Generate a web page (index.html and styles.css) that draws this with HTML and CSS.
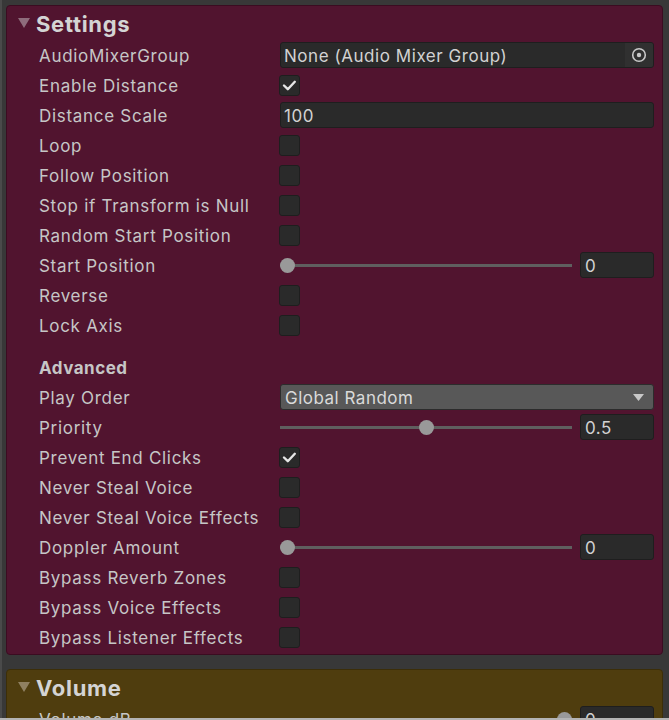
FILE: index.html
```html
<!DOCTYPE html>
<html>
<head>
<meta charset="utf-8">
<link rel="stylesheet" href="styles.css">
</head>
<body>
<div class="window">
  <section class="panel settings">
    <div class="header">
      <svg class="fold" width="12" height="10" viewBox="0 0 12 10"><polygon points="0,0 12,0 6,10"/></svg>
      <span class="title">Settings</span>
    </div>
    <div class="row"><span class="label">AudioMixerGroup</span>
      <div class="objfield"><span class="objtext">None (Audio Mixer Group)</span>
        <span class="picker"><svg width="16" height="16" viewBox="0 0 16 16"><circle cx="8" cy="8" r="6.3" fill="none" stroke="#c8c8c8" stroke-width="1.6"/><circle cx="8" cy="8" r="2.2" fill="#c8c8c8"/></svg></span>
      </div>
    </div>
    <div class="row"><span class="label">Enable Distance</span><span class="check on"><svg width="21" height="21" viewBox="0 0 21 21"><polyline points="5,10.5 8.8,14.2 15.8,6.8"/></svg></span></div>
    <div class="row"><span class="label">Distance Scale</span><div class="textfield"><span class="val">100</span></div></div>
    <div class="row"><span class="label">Loop</span><span class="check"></span></div>
    <div class="row"><span class="label">Follow Position</span><span class="check"></span></div>
    <div class="row"><span class="label">Stop if Transform is Null</span><span class="check"></span></div>
    <div class="row"><span class="label">Random Start Position</span><span class="check"></span></div>
    <div class="row"><span class="label">Start Position</span>
      <div class="slider"><div class="track"><span class="knob" style="--v:0"></span></div><div class="numfield"><span class="val">0</span></div></div>
    </div>
    <div class="row"><span class="label">Reverse</span><span class="check"></span></div>
    <div class="row"><span class="label">Lock Axis</span><span class="check"></span></div>
    <div class="row subhead"><span class="label bold">Advanced</span></div>
    <div class="row"><span class="label">Play Order</span>
      <div class="dropdown"><span class="val">Global Random</span><svg width="11" height="7" viewBox="0 0 11 7"><polygon points="0,0 11,0 5.5,7" fill="#c8c8c8"/></svg></div>
    </div>
    <div class="row"><span class="label">Priority</span>
      <div class="slider"><div class="track"><span class="knob" style="--v:0.5"></span></div><div class="numfield"><span class="val">0.5</span></div></div>
    </div>
    <div class="row"><span class="label">Prevent End Clicks</span><span class="check on"><svg width="21" height="21" viewBox="0 0 21 21"><polyline points="5,10.5 8.8,14.2 15.8,6.8"/></svg></span></div>
    <div class="row"><span class="label">Never Steal Voice</span><span class="check"></span></div>
    <div class="row"><span class="label">Never Steal Voice Effects</span><span class="check"></span></div>
    <div class="row"><span class="label">Doppler Amount</span>
      <div class="slider"><div class="track"><span class="knob" style="--v:0"></span></div><div class="numfield"><span class="val">0</span></div></div>
    </div>
    <div class="row"><span class="label">Bypass Reverb Zones</span><span class="check"></span></div>
    <div class="row"><span class="label">Bypass Voice Effects</span><span class="check"></span></div>
    <div class="row"><span class="label">Bypass Listener Effects</span><span class="check"></span></div>
  </section>
  <section class="panel volume">
    <div class="header">
      <svg class="fold" width="12" height="10" viewBox="0 0 12 10"><polygon points="0,0 12,0 6,10"/></svg>
      <span class="title">Volume</span>
    </div>
    <div class="row"><span class="label">Volume dB</span>
      <div class="slider"><div class="track"><span class="knob" style="--v:1"></span></div><div class="numfield"><span class="val">0</span></div></div>
    </div>
  </section>
</div>
<div class="bottomline"></div>
</body>
</html>
```
FILE: styles.css
```css
html, body {
  margin: 0;
  padding: 0;
}
body {
  background: #383838;
  width: 669px;
  height: 720px;
  overflow: hidden;
  font-family: Inter, "Noto Sans", sans-serif;
  font-size: 17px;
  color: #c6c6c6;
  border-left: 2px solid #4a4a4a;
  box-sizing: border-box;
}
.window {
  padding: 5px 6px 0 4px;
  display: flex;
  flex-direction: column;
  gap: 14px;
}
.panel {
  border: 1px solid #3b0c21;
  border-radius: 4px;
  padding: 0 8px 2px 32px;
}
.settings {
  background: #51142f;
}
.volume {
  background: #4f3d0e;
  border-color: #3c2e08;
  height: 80px;
}
.header {
  height: 34px;
  display: flex;
  align-items: center;
  margin-left: -21px;
}
.fold {
  margin-right: 6px;
}
.settings .fold polygon { fill: #8e6c7c; }
.volume .fold polygon { fill: #8f8061; }
.title {
  font-weight: 700;
  font-size: 22px;
  color: #d4d4d4;
  letter-spacing: 0.7px;
  padding-top: 1px;
}
.row {
  height: 30px;
  display: flex;
  align-items: center;
}
.subhead {
  margin-top: 12px;
}
.label {
  width: 241px;
  flex: none;
  white-space: nowrap;
  letter-spacing: 0.7px;
  padding-top: 2px;
}
.bold {
  font-weight: 700;
  letter-spacing: 0.5px;
}
.val {
  padding-top: 2px;
  letter-spacing: 0.5px;
}
.check {
  width: 21px;
  height: 21px;
  box-sizing: border-box;
  background: #2a2a2a;
  border: 1px solid #1e1e1e;
  border-radius: 3px;
  margin-left: -1px;
  position: relative;
}
.check svg {
  position: absolute;
  left: -1px;
  top: -1px;
}
.check polyline {
  fill: none;
  stroke: #e6e6e6;
  stroke-width: 2.4;
  stroke-linecap: round;
  stroke-linejoin: round;
}
.objfield, .textfield, .numfield {
  background: #2a2a2a;
  border: 1px solid #1e1e1e;
  border-radius: 3px;
  box-sizing: border-box;
  height: 26px;
  display: flex;
  align-items: center;
  color: #d2d2d2;
}
.objfield {
  flex: 1;
  padding-left: 3px;
  overflow: hidden;
}
.objtext {
  flex: 1;
  letter-spacing: 0.55px;
  padding-top: 2px;
}
.picker {
  width: 28px;
  height: 24px;
  background: #303030;
  display: flex;
  align-items: center;
  justify-content: center;
}
.textfield {
  flex: 1;
  padding-left: 3px;
}
.slider {
  flex: 1;
  display: flex;
  align-items: center;
  gap: 8px;
}
.track {
  flex: 1;
  height: 3px;
  background: #5f5f5f;
  position: relative;
}
.knob {
  position: absolute;
  width: 15px;
  height: 15px;
  border-radius: 50%;
  background: #999999;
  top: -6px;
  left: calc(var(--v) * (100% - 15px));
}
.numfield {
  width: 74px;
  flex: none;
  padding-left: 4px;
}
.dropdown {
  flex: 1;
  height: 26px;
  box-sizing: border-box;
  background: #585858;
  border: 1px solid #2c2c2c;
  border-radius: 3px;
  display: flex;
  align-items: center;
  justify-content: space-between;
  padding: 0 9px 0 4px;
  color: #dadada;
}
.bottomline {
  position: fixed;
  left: 0;
  right: 0;
  bottom: 0;
  height: 2px;
  background: #b4b4b4;
}
```
